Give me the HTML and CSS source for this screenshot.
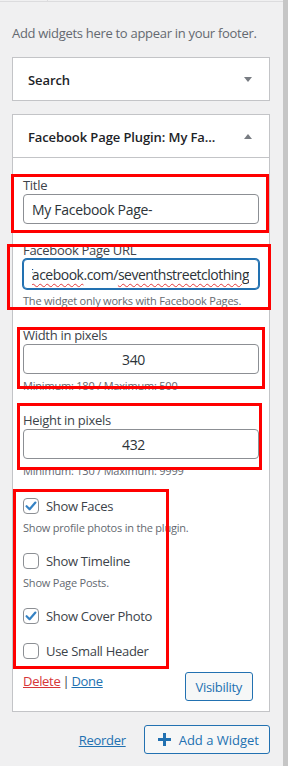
FILE: index.html
```html
<!DOCTYPE html>
<html lang="en">
<head>
    <meta charset="UTF-8">
    <meta name="viewport" content="width=device-width, initial-scale=1.0">
    <title>Footer widgets</title>
    <link rel="stylesheet" href="styles.css">
</head>
<body>
    <div class="screen">
        <div class="sidebar">
            <!-- edge of the panel above -->
            <div class="edge"><div class="edge-stub"></div></div>

            <p class="area-description">Add widgets here to appear in your footer.</p>

            <div class="widget">
                <div class="widget-top">
                    <h3 class="widget-title">Search</h3>
                    <span class="toggle toggle-down"></span>
                </div>
            </div>

            <div class="widget">
                <div class="widget-top">
                    <h3 class="widget-title">Facebook Page Plugin: My Fa...</h3>
                    <span class="toggle toggle-up"></span>
                </div>

                <div class="widget-inside">
                    <div class="field">
                        <label class="field-label">Title</label>
                        <input class="text-input" type="text" value="My Facebook Page-">
                    </div>

                    <div class="field">
                        <label class="field-label">Facebook Page URL</label>
                        <div class="text-input is-focused url-input">
                            <div class="url-clip">
                                <span class="url-text">https://www.<span class="misspelt">facebook</span>.com/<span class="misspelt">seventhstreetclothing</span></span>
                            </div>
                        </div>
                        <p class="help">The widget only works with Facebook Pages.</p>
                    </div>

                    <div class="field">
                        <label class="field-label">Width in pixels</label>
                        <input class="text-input number-input" type="text" value="340">
                        <p class="help">Minimum: 180 / Maximum: 500</p>
                    </div>

                    <div class="field">
                        <label class="field-label">Height in pixels</label>
                        <input class="text-input number-input" type="text" value="432">
                        <p class="help">Minimum: 130 / Maximum: 9999</p>
                    </div>

                    <div class="options">
                        <label class="check-row">
                            <span class="checkbox is-checked">
                                <svg viewBox="0 0 16 16" width="16" height="16"><path d="M3.6 8.2 L6.6 11.2 L12.4 4.6" fill="none" stroke="#3582c4" stroke-width="2.2" stroke-linecap="round" stroke-linejoin="round"/></svg>
                            </span>
                            Show Faces
                        </label>
                        <p class="help option-help">Show profile photos in the plugin.</p>

                        <label class="check-row">
                            <span class="checkbox"></span>
                            Show Timeline
                        </label>
                        <p class="help option-help">Show Page Posts.</p>

                        <label class="check-row">
                            <span class="checkbox is-checked">
                                <svg viewBox="0 0 16 16" width="16" height="16"><path d="M3.6 8.2 L6.6 11.2 L12.4 4.6" fill="none" stroke="#3582c4" stroke-width="2.2" stroke-linecap="round" stroke-linejoin="round"/></svg>
                            </span>
                            Show Cover Photo
                        </label>

                        <label class="check-row">
                            <span class="checkbox"></span>
                            Use Small Header
                        </label>
                    </div>

                    <div class="widget-actions">
                        <div class="action-links">
                            <a href="#" class="link-delete">Delete</a> | <a href="#" class="link-done">Done</a>
                        </div>
                        <button class="button">Visibility</button>
                    </div>
                </div>
            </div>

            <div class="area-actions">
                <a href="#" class="link-reorder">Reorder</a>
                <button class="button button-add">
                    <svg viewBox="0 0 13 13" width="13" height="13"><path d="M6.5 0 V13 M0 6.5 H13" stroke="#2271b1" stroke-width="3"/></svg>
                    Add a Widget
                </button>
            </div>

            <!-- red annotation frames drawn over the form -->
            <div class="mark mark-title"></div>
            <div class="mark mark-url"></div>
            <div class="mark mark-width"></div>
            <div class="mark mark-height"></div>
            <div class="mark mark-options"></div>
        </div>
        <div class="scrollbar"></div>
    </div>
</body>
</html>
```

FILE: styles.css
```css
* {
    margin: 0;
    padding: 0;
    box-sizing: border-box;
}
body {
    font-family: 'Open Sans', 'Noto Sans', sans-serif;
    font-size: 13px;
    color: #3c434a;
    background: #f0f0f1;
}
.screen {
    display: flex;
    min-height: 766px;
}
.sidebar {
    position: relative;
    width: 283px;
    padding: 0 13px 0 12px;
}
.scrollbar {
    width: 5px;
    background: #c6c6c6;
}
.edge {
    height: 2px;
    border-bottom: 1px solid #dcdcde;
    margin: 0 -13px 0 -12px;
}
.edge-stub {
    width: 48px;
    height: 1px;
    border-right: 1px solid #dcdcde;
}
.area-description {
    margin-top: 22px;
    line-height: 18px;
    color: #646970;
    letter-spacing: -0.3px;
}
/* widget cards */
.widget {
    margin-top: 15px;
    background: #fff;
    border: 1px solid #c3c4c7;
}
.widget + .widget {
    margin-top: 13px;
}
.widget-top {
    height: 42px;
    display: flex;
    align-items: center;
    justify-content: space-between;
    padding: 0 17px 0 15px;
}
.widget-title {
    padding-top: 2px;
    font-size: 13px;
    font-weight: 600;
    color: #1d2327;
    letter-spacing: -0.1px;
}
.toggle {
    width: 0;
    height: 0;
    border-left: 4px solid transparent;
    border-right: 4px solid transparent;
}
.toggle-down {
    border-top: 5px solid #787c82;
}
.toggle-up {
    border-bottom: 5px solid #787c82;
}
.widget-inside {
    border-top: 1px solid #c3c4c7;
    padding: 19px 10px 10px;
}
.field + .field {
    margin-top: 18px;
}
.field-label {
    display: block;
    line-height: 17px;
    letter-spacing: -0.3px;
}
.text-input {
    display: block;
    width: 100%;
    height: 30px;
    padding: 0 8px;
    border: 1px solid #8c8f94;
    border-radius: 4px;
    background: #fff;
    font-family: inherit;
    font-size: 14px;
    color: #2c3338;
    letter-spacing: -0.3px;
    outline: none;
}
.number-input {
    text-align: center;
    padding-right: 23px;
}
.is-focused {
    border-color: #2271b1;
    box-shadow: 0 0 0 1px #2271b1;
}
.url-input {
    display: flex;
    padding: 0 9px 0 8px;
}
.url-clip {
    flex: 1;
    display: flex;
    align-items: center;
    justify-content: flex-end;
    overflow: hidden;
    white-space: nowrap;
    letter-spacing: -0.5px;
}
.url-text {
    flex-shrink: 0;
}
.misspelt {
    text-decoration: underline wavy #e43a3a;
    text-decoration-thickness: 1px;
    text-underline-offset: 3px;
}
.help {
    margin-top: 4px;
    font-size: 11px;
    line-height: 16px;
    color: #646970;
    letter-spacing: -0.2px;
}
/* checkboxes */
.options {
    margin-top: 17px;
}
.check-row {
    display: flex;
    align-items: center;
    gap: 7px;
    height: 20px;
    line-height: 20px;
    letter-spacing: -0.3px;
}
.option-help + .check-row,
.check-row + .check-row {
    margin-top: 15px;
}
.checkbox {
    width: 16px;
    height: 16px;
    border: 1px solid #8c8f94;
    border-radius: 4px;
    background: #fff;
    display: flex;
    align-items: center;
    justify-content: center;
}
.checkbox svg {
    margin: -1px;
}
.widget-actions {
    margin-top: 10px;
    display: flex;
    justify-content: space-between;
    align-items: flex-start;
}
.action-links {
    line-height: 21px;
    color: #3c434a;
    letter-spacing: -0.3px;
    word-spacing: -1px;
}
.action-links a {
    text-decoration: underline;
}
.link-delete {
    color: #d63638;
}
.link-done,
.link-reorder {
    color: #2271b1;
}
.button {
    height: 29px;
    margin: 1px 6px 0 0;
    padding: 0 10px;
    border: 1px solid #2271b1;
    border-radius: 3px;
    background: #f6f7f7;
    color: #2271b1;
    font-family: inherit;
    font-size: 13px;
    letter-spacing: -0.3px;
}
/* bottom row under the widgets */
.area-actions {
    margin-top: 13px;
    display: flex;
    justify-content: flex-end;
    align-items: center;
    gap: 18px;
}
.link-reorder {
    text-decoration: underline;
    letter-spacing: -0.3px;
}
.button-add {
    margin: 0;
    display: flex;
    align-items: center;
    gap: 8px;
    padding: 0 10px 0 13px;
    letter-spacing: 0;
}
/* red annotation frames */
.mark {
    position: absolute;
    border: 3px solid #f00;
}
.mark-title {
    left: 11px;
    top: 174px;
    width: 258px;
    height: 59px;
}
.mark-url {
    left: 7px;
    top: 244px;
    width: 264px;
    height: 66px;
}
.mark-width {
    left: 17px;
    top: 327px;
    width: 248px;
    height: 62px;
}
.mark-height {
    left: 17px;
    top: 403px;
    width: 245px;
    height: 67px;
}
.mark-options {
    left: 13px;
    top: 489px;
    width: 156px;
    height: 180px;
}
```
